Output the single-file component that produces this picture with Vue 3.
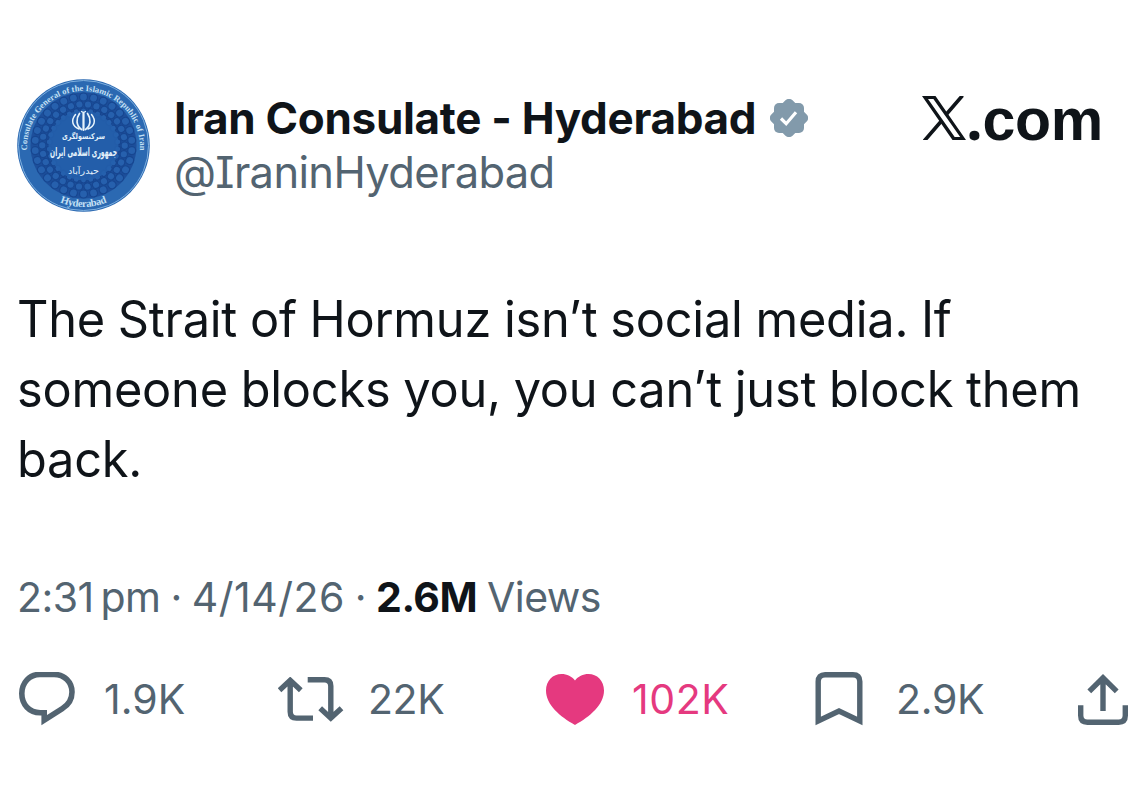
<script setup>
const petals = Array.from({ length: 30 }, (_, i) => i * 12)
</script>

<template>
  <main class="post">
    <header class="head">
      <svg class="avatar" viewBox="0 0 133 133" aria-label="Consulate seal">
        <defs>
          <path id="ringTop" d="M10.500 76 A56.500 56.500 0 1 1 122.500 76" />
          <path id="ringBottom" d="M25 112 A62 62 0 0 0 108 112" />
        </defs>
        <circle cx="66.500" cy="66.500" r="66.300" fill="#2b69b2" />
        <circle cx="66.500" cy="66.500" r="65" fill="none" stroke="#7fb0df" stroke-width="1" />
        <circle cx="66.500" cy="66.500" r="53" fill="#1d4f9b" />
        <!-- lace pattern inside the ring -->
        <g fill="#2660ad" stroke="#174690" stroke-width="1.200">
          <g v-for="a in petals" :key="a" :transform="`rotate(${a} 66.500 66.500)`">
            <circle cx="66.500" cy="18" r="4" />
            <circle cx="71" cy="25.500" r="3.700" />
            <circle cx="66.500" cy="32" r="3" />
          </g>
        </g>
        <circle cx="66.500" cy="66.500" r="35" fill="#2560ad" opacity="0.85" />
        <g class="ring-text">
          <text font-size="8.500"><textPath href="#ringTop" startOffset="50%" text-anchor="middle" textLength="183">Consulate General of the Islamic Republic of Iran</textPath></text>
          <text font-size="10.500"><textPath href="#ringBottom" startOffset="50%" text-anchor="middle" textLength="48">Hyderabad</textPath></text>
        </g>
        <g fill="none" stroke="#e6f3fc" stroke-linecap="round">
          <path d="M66.500 34v17" stroke-width="2.200" />
          <path d="M62.500 34.500c-3.600 5-3.600 12 2 16M70.500 34.500c3.600 5 3.600 12-2 16" stroke-width="1.700" />
          <path d="M58.500 35.500c-5 6-3 12 3.500 14.500M74.500 35.500c5 6 3 12-3.500 14.500" stroke-width="1.500" />
          <path d="M64.500 32.500q2 1.500 4 0" stroke-width="1.200" />
        </g>
        <g class="seal-text">
          <text x="66.500" y="59.500" font-size="8" font-weight="bold" textLength="43" lengthAdjust="spacingAndGlyphs">سرکنسولگری</text>
          <text x="66.500" y="76.500" font-size="12" font-weight="bold" textLength="67" lengthAdjust="spacingAndGlyphs">جمهوری اسلامی ایران</text>
          <text x="66.500" y="95" font-size="9" textLength="31" lengthAdjust="spacingAndGlyphs">حیدرآباد</text>
        </g>
      </svg>

      <div class="who">
        <div class="name-row">
          <span class="name">Iran Consulate - Hyderabad</span>
          <svg class="badge" viewBox="0 0 38 38">
            <g fill="#829aab">
              <rect x="4" y="4" width="30" height="30" rx="5" />
              <rect x="4" y="4" width="30" height="30" rx="5" transform="rotate(45 19 19)" />
            </g>
            <path fill="none" stroke="#fff" stroke-width="3.200" d="M11 19.500l5.200 5.200 9.800-11.400" />
          </svg>
        </div>
        <div class="handle">@IraninHyderabad</div>
      </div>

      <div class="brand">
        <svg class="x-logo" viewBox="0 0 44 44">
          <path fill="#0f1419" fill-rule="evenodd" d="M0 0h13.500L44 44H30.500zM6 3l26.700 38h5.500L11.400 3z" />
          <path fill="none" stroke="#0f1419" stroke-width="3.600" d="M40.500-.5L24.600 18M19 25.500L2.200 45" />
        </svg>
        <span class="brand-text"><span class="dot">.</span>com</span>
      </div>
    </header>

    <p class="body">
      The Strait of Hormuz isn’t social media. If<br />
      someone blocks you, you can’t just block them<br />
      back.
    </p>

    <div class="meta">
      <span>2:31&thinsp;pm</span>
      <span>·</span>
      <span class="date">4/14/26</span>
      <span>·</span>
      <strong>2.6M</strong>
      <span>Views</span>
    </div>

    <footer class="actions">
      <div class="action reply">
        <svg width="58" height="54" viewBox="0 1 58 54">
          <path fill="none" stroke="#536471" stroke-width="5.600" d="M23 3.400h14C47.500 3.400 55 11.300 55 21.100c0 7.200-3.700 13-9.700 16.500L27.200 49.100V41.800h-4C12.300 41.800 4.800 33.500 4.800 22.600 4.800 11.600 12.500 3.400 23 3.400z" />
        </svg>
        <span>1.9K</span>
      </div>
      <div class="action repost">
        <svg width="66" height="45" viewBox="0 0 66 45">
          <g fill="none" stroke="#536471" stroke-width="5.400">
            <path d="M1.500 13.200L12.200 3.300l10.600 9.900M12.200 4.500v30.300q0 6.300 6.300 6.300H35" />
            <path d="M42.200 31.200l10.600 9.900 10.700-9.900M52.800 40V9q0-6.300-6.300-6.300H29.700" />
          </g>
        </svg>
        <span>22K</span>
      </div>
      <div class="action like">
        <svg width="58" height="51" viewBox="0 0 58 51">
          <path fill="#e5397f" d="M29 51C14 42.500 0 31 0 16.500 0 6.500 7 0 15.500 0 21 0 26 2.400 29 6.500 32 2.400 37 0 42.500 0 51 0 58 6.500 58 16.500 58 31 44 42.500 29 51z" />
        </svg>
        <span>102K</span>
      </div>
      <div class="action save">
        <svg width="48" height="54" viewBox="0 1 48 54">
          <path fill="none" stroke="#536471" stroke-width="5.400" d="M3.200 50V10.600q0-6.900 6.900-6.900h27.800q6.900 0 6.900 6.900V50L24 40z" />
        </svg>
        <span>2.9K</span>
      </div>
      <div class="action share">
        <svg width="50" height="51" viewBox="0 0 50 51">
          <g fill="none" stroke="#536471" stroke-width="5.400">
            <path d="M25 37V4M11.300 17.300L25 3.800l13.700 13.500" />
            <path d="M2.700 31.300v10.300q0 6.700 6.700 6.700h31.200q6.700 0 6.700-6.700V31.300" />
          </g>
        </svg>
      </div>
    </footer>
  </main>
</template>

<style>
body {
  background: #fff;
}
</style>

<style scoped>
.post {
  box-sizing: border-box;
  width: 1133px;
  height: 802px;
  padding: 79px 0 0 17px;
  overflow: hidden;
  color: #0f1419;
  font-family: Inter, "Liberation Sans", sans-serif;
  white-space: nowrap;
}

.head {
  display: flex;
  align-items: flex-start;
  height: 205px;
}

.avatar {
  flex: none;
  width: 133px;
  height: 133px;
}

.ring-text {
  fill: #c4e0f5;
  font-family: "Liberation Serif", serif;
  font-weight: 700;
}

.seal-text {
  fill: #e2f1fb;
  font-family: "DejaVu Sans", sans-serif;
  text-anchor: middle;
  direction: rtl;
}

.who {
  width: 748px;
  margin-left: 24px;
  padding-top: 12px;
}

.name-row {
  display: flex;
  align-items: center;
  gap: 14px;
  height: 54px;
}

.name {
  font-size: 44px;
  font-weight: 700;
  line-height: 50px;
  letter-spacing: -0.3px;
}

.badge {
  width: 38px;
  height: 38px;
}

.handle {
  height: 54px;
  color: #536471;
  font-size: 43.5px;
  line-height: 54px;
  letter-spacing: -0.65px;
  font-feature-settings: "cv08";
}

.brand {
  display: flex;
  align-items: flex-start;
  padding-top: 17px;
}

.x-logo {
  width: 44px;
  height: 44px;
}

.brand-text {
  font-family: "Liberation Sans", sans-serif;
  font-size: 59px;
  font-weight: 700;
  line-height: 48px;
  letter-spacing: -0.3px;
}

.dot {
  font-family: "Open Sans", sans-serif;
  line-height: 1px;
}

.body {
  width: 1150px;
  height: 210px;
  margin: 0;
  font-size: 50px;
  line-height: 70px;
  letter-spacing: -0.25px;
  word-spacing: -0.65px;
  transform: scaleX(0.975);
  transform-origin: left;
}

.meta {
  display: flex;
  gap: 10px;
  height: 60px;
  margin-top: 73px;
  color: #536471;
  font-size: 41px;
  line-height: 60px;
  letter-spacing: -0.55px;
}

.meta strong {
  color: #0f1419;
  font-weight: 700;
}

.date {
  letter-spacing: 0.5px;
}

.actions {
  display: flex;
  align-items: center;
  height: 54px;
  margin-top: 45px;
  color: #536471;
  font-size: 41px;
}

.action {
  display: flex;
  align-items: center;
}

.action svg {
  flex: none;
}

.reply {
  width: 261px;
  gap: 29px;
}

.repost {
  width: 268px;
  gap: 24px;
  letter-spacing: -0.4px;
}

.like {
  width: 269px;
  gap: 28px;
  color: #e5397f;
  letter-spacing: 0.6px;
}

.save {
  width: 263px;
  gap: 33px;
  letter-spacing: -0.3px;
}
</style>
